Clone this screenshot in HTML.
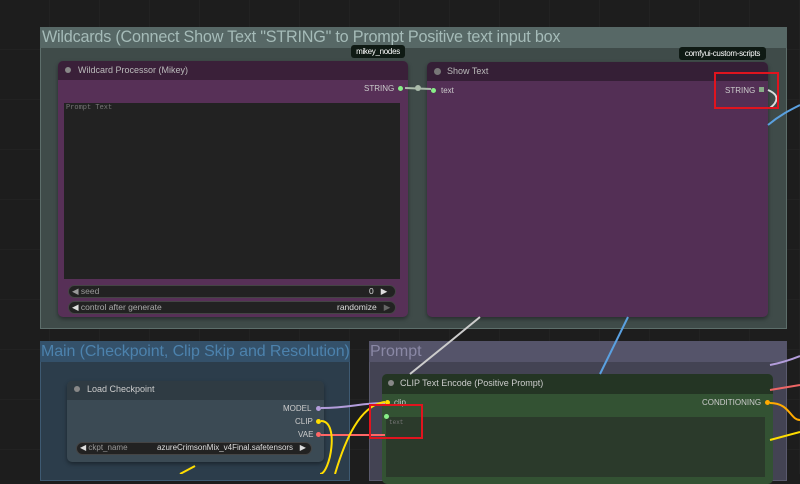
<!DOCTYPE html>
<html><head><style>
body{margin:0;width:800px;height:474px;overflow:hidden;background:#1d1d1d;font-family:"Liberation Sans",sans-serif;position:relative}
.a{position:absolute;box-sizing:border-box;white-space:nowrap}
.t{font-size:10px;color:#ddd}
</style></head><body>
<svg class="a" style="left:0;top:0" width="800" height="474">
<defs><pattern id="g" width="50" height="50" patternUnits="userSpaceOnUse"><path d="M50 0V50H0" fill="none" stroke="#262626" stroke-width="1"/></pattern></defs>
<rect width="800" height="474" fill="url(#g)"/>
</svg>
<!-- top group -->
<div class="a" style="left:40px;top:27px;width:747px;height:302px;background:#3f4b49;border:1px solid #5d6e6b"></div>
<div class="a" style="left:40px;top:27px;width:747px;height:21px;background:#576866"></div>
<div class="a" style="left:42px;top:28px;font-size:16.2px;letter-spacing:-0.22px;color:#a5bbb8">Wildcards (Connect Show Text "STRING" to Prompt Positive text input box</div>
<div class="a" style="left:351px;top:45px;width:54px;height:13px;background:#0f1a14;border-radius:3px;color:#fff;font-size:8px;letter-spacing:-0.3px;text-align:center;line-height:13px">mikey_nodes</div>
<div class="a" style="left:679px;top:47px;width:87px;height:13px;background:#0f1a14;border-radius:3px;color:#fff;font-size:8px;letter-spacing:-0.3px;text-align:center;line-height:13px">comfyui-custom-scripts</div>
<!-- wildcard node -->
<div class="a" style="left:58px;top:61px;width:350px;height:256px;background:#573057;border-radius:5px;overflow:hidden;box-shadow:0 2px 4px #0006">
<div class="a" style="left:0;top:0;width:350px;height:19px;background:#3a2039"></div>
</div>
<div class="a" style="left:65px;top:67px;width:6px;height:6px;border-radius:50%;background:#888"></div>
<div class="a" style="left:78px;top:65px;font-size:9px;color:#bbb">Wildcard Processor (Mikey)</div>
<div class="a" style="left:364px;top:84px;color:#ccc;font-size:8px">STRING</div>
<div class="a" style="left:398px;top:86px;width:5px;height:5px;border-radius:50%;background:#8e8"></div>
<div class="a" style="left:64px;top:103px;width:336px;height:176px;background:#222"></div>
<div class="a" style="left:66px;top:104px;font-family:'Liberation Mono',monospace;font-size:7px;color:#777">Prompt Text</div>
<div class="a" style="left:68px;top:285px;width:328px;height:13px;border-radius:7px;background:#222;border:1px solid #444"></div>
<div class="a" style="left:68px;top:301px;width:328px;height:13px;border-radius:7px;background:#222;border:1px solid #444"></div>
<div class="a" style="left:72px;top:286px;font-size:8.5px;color:#999">◀ seed</div>
<div class="a" style="left:369px;top:286px;font-size:8.5px;color:#ddd">0&nbsp;&nbsp;&nbsp;▶</div>
<div class="a" style="left:72px;top:302px;font-size:8.5px;color:#aaa"><span style="color:#ddd">◀</span> control after generate</div>
<div class="a" style="left:337px;top:302px;font-size:8.5px;color:#ddd">randomize&nbsp;&nbsp;&nbsp;<span style="color:#666">▶</span></div>
<!-- show text node -->
<div class="a" style="left:427px;top:62px;width:341px;height:255px;background:#532f55;border-radius:5px;overflow:hidden;box-shadow:0 2px 4px #0006">
<div class="a" style="left:0;top:0;width:341px;height:19px;background:#351f36"></div>
</div>
<div class="a" style="left:434px;top:68px;width:7px;height:7px;border-radius:50%;background:#777"></div>
<div class="a" style="left:447px;top:66px;font-size:9px;color:#bbb">Show Text</div>
<div class="a" style="left:431px;top:88px;width:5px;height:5px;border-radius:50%;background:#8e8"></div>
<div class="a" style="left:441px;top:86px;font-size:8px;color:#ccc">text</div>
<div class="a" style="left:725px;top:86px;font-size:8px;color:#ccc">STRING</div>
<div class="a" style="left:759px;top:87px;width:5px;height:5px;background:#8a8"></div>
<!-- bottom groups -->
<div class="a" style="left:40px;top:341px;width:310px;height:140px;background:#2c3d4b;border:1px solid #3e5a72"></div>
<div class="a" style="left:40px;top:341px;width:310px;height:21px;background:#34516a"></div>
<div class="a" style="left:41px;top:343px;font-size:16px;letter-spacing:-0.1px;color:#4c82ad">Main (Checkpoint, Clip Skip and Resolution)</div>
<div class="a" style="left:369px;top:341px;width:418px;height:140px;background:#434353;border:1px solid #5a5a6e"></div>
<div class="a" style="left:369px;top:341px;width:418px;height:21px;background:#55546a"></div>
<div class="a" style="left:370px;top:343px;font-size:16px;color:#8a88a5">Prompt</div>
<!-- load checkpoint -->
<div class="a" style="left:67px;top:381px;width:257px;height:81px;background:#3b4a54;border-radius:5px;overflow:hidden;box-shadow:0 2px 4px #0006">
<div class="a" style="left:0;top:0;width:257px;height:19px;background:#2f3b43"></div></div>
<div class="a" style="left:74px;top:386px;width:6px;height:6px;border-radius:50%;background:#888"></div>
<div class="a" style="left:87px;top:384px;font-size:9px;color:#ccc">Load Checkpoint</div>
<div class="a" style="left:283px;top:404px;font-size:8px;color:#ccc">MODEL</div>
<div class="a" style="left:295px;top:417px;font-size:8px;color:#ccc">CLIP</div>
<div class="a" style="left:298px;top:430px;font-size:8px;color:#ccc">VAE</div>
<div class="a" style="left:316px;top:406px;width:5px;height:5px;border-radius:50%;background:#b39ddb"></div>
<div class="a" style="left:316px;top:419px;width:5px;height:5px;border-radius:50%;background:#fd0"></div>
<div class="a" style="left:316px;top:432px;width:5px;height:5px;border-radius:50%;background:#f66"></div>
<div class="a" style="left:76px;top:442px;width:236px;height:13px;border-radius:7px;background:#222;border:1px solid #444"></div>
<div class="a" style="left:80px;top:443px;font-size:8px;color:#999"><span style="color:#ddd">◀</span> ckpt_name</div>
<div class="a" style="left:157px;top:443px;font-size:8px;color:#ddd">azureCrimsonMix_v4Final.safetensors&nbsp;&nbsp;&nbsp;▶</div>
<!-- clip text encode -->
<div class="a" style="left:382px;top:374px;width:391px;height:110px;background:#335233;border-radius:5px;overflow:hidden">
<div class="a" style="left:0;top:0;width:391px;height:20px;background:#243524"></div></div>
<div class="a" style="left:388px;top:380px;width:6px;height:6px;border-radius:50%;background:#888"></div>
<div class="a" style="left:400px;top:378px;font-size:9px;color:#ccc">CLIP Text Encode (Positive Prompt)</div>
<div class="a" style="left:385px;top:400px;width:5px;height:5px;border-radius:50%;background:#fd0"></div>
<div class="a" style="left:394px;top:398px;font-size:8px;color:#ccc">clip</div>
<div class="a" style="left:702px;top:398px;font-size:8px;color:#ccc">CONDITIONING</div>
<div class="a" style="left:765px;top:400px;width:5px;height:5px;border-radius:50%;background:#fa0"></div>
<div class="a" style="left:386px;top:417px;width:379px;height:60px;background:#2b3a2b"></div>
<div class="a" style="left:384px;top:414px;width:5px;height:5px;border-radius:50%;background:#8e8"></div>
<div class="a" style="left:389px;top:419px;font-family:'Liberation Mono',monospace;font-size:6px;color:#777">text</div>
<!-- wires -->
<svg class="a" style="left:0;top:0" width="800" height="474" fill="none" stroke-width="2">
<path d="M405 88 L431 89" stroke="#aabbaa"/><circle cx="418" cy="88" r="3" fill="#aabbaa"/>
<path d="M768 90 C780 95 778 102 770 108" stroke="#ddd"/>
<path d="M480 317 L452 340 L410 374" stroke="#ccc"/>
<path d="M628 317 L600 374" stroke="#5aa0e0"/>
<path d="M768 125 C780 115 790 110 800 105" stroke="#5aa0e0"/>
<path d="M770 365 C785 362 795 358 800 356" stroke="#b39ddb"/>
<path d="M321 408 C350 408 360 403 385 403" stroke="#b39ddb"/>
<path d="M321 435 L385 435" stroke="#f66"/>
<path d="M321 421 C340 421 330 474 320 474" stroke="#fd0"/>
<path d="M385 402 C360 405 345 440 335 474" stroke="#fd0"/>
<path d="M180 474 L195 466" stroke="#fd0"/>
<path d="M770 403 C790 403 790 420 800 420" stroke="#fa0"/>
<path d="M770 440 L800 432" stroke="#fd0"/>
<path d="M770 390 L800 385" stroke="#e66"/>
</svg>
<!-- red boxes -->
<div class="a" style="left:714px;top:72px;width:65px;height:37px;border:2px solid #e0141e"></div>
<div class="a" style="left:369px;top:404px;width:54px;height:35px;border:2px solid #e0141e"></div>
</body></html>
